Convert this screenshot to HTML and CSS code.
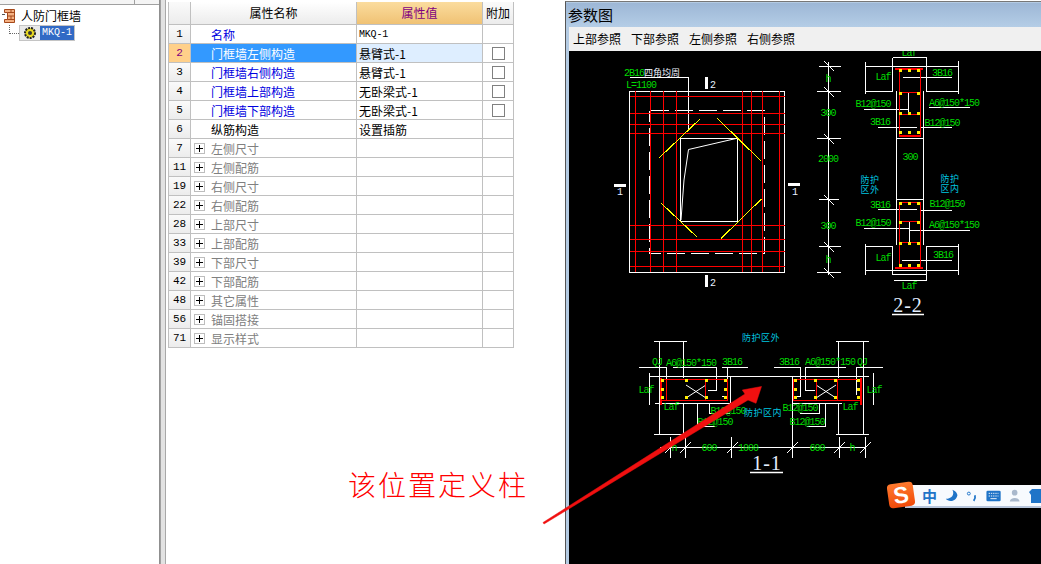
FILE: index.html
```html
<!DOCTYPE html>
<html lang="zh">
<head>
<meta charset="utf-8">
<title>人防门框墙</title>
<link rel="stylesheet" href="styles.css">
</head>
<body>
<div class="app">
  <aside class="tree-pane">
    <div class="tree-top"><span class="tree-top-cell"></span></div>
    <div class="tree-root">
      <svg class="brick" width="13" height="14" viewBox="0 0 13 14"><path d="M2.500 .5H12.500V13.500H2.500V10.500H5.500V3.500H2.500Z" fill="#f4b183" stroke="#a5481a"/><path d="M5.500 3.500H12.500M5.500 7H12.500M5.500 10.500H12.500M9 .5V3.500M9 7V10.500" stroke="#a5481a" fill="none"/><rect x="0" y="5" width="3" height="1" fill="#555"/></svg>
      <span>人防门框墙</span>
    </div>
    <div class="tree-child">
      <span class="tree-dots"></span>
      <span class="node">
        <span class="node-icon"><svg width="14" height="14" viewBox="0 0 14 14"><circle cx="7" cy="7" r="5" fill="#e8d820" stroke="#222" stroke-width="2" stroke-dasharray="2 1"/><circle cx="7" cy="7" r="2" fill="#333"/></svg></span>
        <span class="node-label">MKQ-1</span>
      </span>
    </div>
  </aside>
  <div class="splitter"></div>
  <main class="prop-pane">
    <div class="grid">
      <div class="row head"><span class="c n"></span><span class="c name">属性名称</span><span class="c val">属性值</span><span class="c ex">附加</span></div>
      <div class="row"><span class="c n">1</span><span class="c name blue">名称</span><span class="c val mono">MKQ-1</span><span class="c ex"></span></div>
      <div class="row sel"><span class="c n">2</span><span class="c name blue">门框墙左侧构造</span><span class="c val">悬臂式-1</span><span class="c ex"><i class="chk"></i></span></div>
      <div class="row"><span class="c n">3</span><span class="c name blue">门框墙右侧构造</span><span class="c val">悬臂式-1</span><span class="c ex"><i class="chk"></i></span></div>
      <div class="row"><span class="c n">4</span><span class="c name blue">门框墙上部构造</span><span class="c val">无卧梁式-1</span><span class="c ex"><i class="chk"></i></span></div>
      <div class="row"><span class="c n">5</span><span class="c name blue">门框墙下部构造</span><span class="c val">无卧梁式-1</span><span class="c ex"><i class="chk"></i></span></div>
      <div class="row"><span class="c n">6</span><span class="c name">纵筋构造</span><span class="c val">设置插筋</span><span class="c ex"></span></div>
      <div class="row grp"><span class="c n">7</span><span class="c name"><i class="plus"></i>左侧尺寸</span><span class="c val"></span><span class="c ex"></span></div>
      <div class="row grp"><span class="c n">11</span><span class="c name"><i class="plus"></i>左侧配筋</span><span class="c val"></span><span class="c ex"></span></div>
      <div class="row grp"><span class="c n">19</span><span class="c name"><i class="plus"></i>右侧尺寸</span><span class="c val"></span><span class="c ex"></span></div>
      <div class="row grp"><span class="c n">22</span><span class="c name"><i class="plus"></i>右侧配筋</span><span class="c val"></span><span class="c ex"></span></div>
      <div class="row grp"><span class="c n">28</span><span class="c name"><i class="plus"></i>上部尺寸</span><span class="c val"></span><span class="c ex"></span></div>
      <div class="row grp"><span class="c n">33</span><span class="c name"><i class="plus"></i>上部配筋</span><span class="c val"></span><span class="c ex"></span></div>
      <div class="row grp"><span class="c n">39</span><span class="c name"><i class="plus"></i>下部尺寸</span><span class="c val"></span><span class="c ex"></span></div>
      <div class="row grp"><span class="c n">42</span><span class="c name"><i class="plus"></i>下部配筋</span><span class="c val"></span><span class="c ex"></span></div>
      <div class="row grp"><span class="c n">48</span><span class="c name"><i class="plus"></i>其它属性</span><span class="c val"></span><span class="c ex"></span></div>
      <div class="row grp"><span class="c n">56</span><span class="c name"><i class="plus"></i>锚固搭接</span><span class="c val"></span><span class="c ex"></span></div>
      <div class="row grp"><span class="c n">71</span><span class="c name"><i class="plus"></i>显示样式</span><span class="c val"></span><span class="c ex"></span></div>
    </div>
  </main>
  <section class="param">
    <header class="param-title">参数图</header>
    <nav class="param-tools"><span>上部参照</span><span>下部参照</span><span>左侧参照</span><span>右侧参照</span></nav>
    <div class="canvas">
      <svg class="cad" width="472" height="513" viewBox="569 51 472 513">
        <!-- plan -->
        <g class="w">
          <rect x="629.500" y="91.500" width="155" height="181"/>
          <rect x="680.500" y="138.500" width="57" height="83"/>
          <path d="M630 77.500H688.500V130"/>
          <path class="soft" d="M681 220L684 180L688.500 149.500L736 138.500"/>
          <path class="dash" d="M651 110.500H764.500V253.500H649V110.500"/>
        </g>
        <g class="r">
          <path d="M630 96.500H785M630 113.500H785M630 124.500H785M630 133.500H785M630 225.500H785M630 239.500H785M630 251.500H785M630 266.500H785"/>
          <path d="M635.500 91V272M650.500 91V272M663.500 91V272M676.500 91V272M742.500 91V272M751.500 91V272M762.500 91V272M779.500 91V272"/>
        </g>
        <g class="y"><path d="M659.500 157.500L700.500 118.500M717.500 118.500L761.500 161.500M661.500 203.500L697.500 237.500M721 238.500L761.500 199"/></g>
        <g class="wf"><rect x="705" y="77" width="3" height="12"/><rect x="705" y="275" width="3" height="12"/><rect x="614" y="184" width="12" height="3"/><rect x="788" y="183" width="12" height="3"/></g>
        <text class="t tw" x="710" y="88">2</text><text class="t tw" x="710" y="286">2</text><text class="t tw" x="617" y="195">1</text><text class="t tw" x="792" y="195">1</text>
        <text class="t tg" x="624" y="76">2B16<tspan class="cjk">四角均周</tspan></text>
        <text class="t tg" x="626" y="88">L=1100</text>

        <!-- section 2-2 -->
        <g class="w">
          <path d="M828.500 62V275M819 66.500H841M817 91.500H841M817 138.500H841M819 199.500H839M819 246.500H841M817 272.500H841"/>
          <path class="soft" d="M824 61L834 71M824 87L834 97M824 134L834 144M824 195L834 205M824 242L834 252M824 268L834 278"/>
          <path d="M896.500 91V245M923.500 91V245M896 138.500H924M896 199.500H924"/>
          <path d="M865.500 62V94M958.500 61V94M865 66.500H958M865 91.500H892.500V58M927 91.500H958M926.500 91.500V57.500H893"/>
          <path d="M865.500 244V275M958.500 244V275M865 246.500H892.500V274.500H927M927 246.500H958M865 270.500H958M926.500 246V280.500H894"/>
          <path d="M864 109.500H908.500M929 107.500H970M878 127.500H917M920 127.500H952M903 77.500H952M878 209.500H917M920 210.500H952M864 228.500H908.500M909 230.500H970M902 260.500H952M908.500 92V112M909.500 222V242"/>
        </g>
        <g class="r">
          <path d="M899.500 68V135.500H920.500V68M899 92.500H921M899 114.500H921"/>
          <path d="M899.500 202V267M920.500 202V267M899 202.500H921M899 221.500H921M899 242.500H921"/>
          <path class="thick" d="M895 68.500H923M895 267.500H923M899 135.500H921"/>
        </g>
        <g class="yf">
          <rect x="899" y="69" width="3" height="3"/><rect x="908" y="69" width="3" height="3"/><rect x="917" y="69" width="3" height="3"/>
          <rect x="899" y="92" width="3" height="3"/><rect x="917" y="92" width="3" height="3"/>
          <rect x="899" y="112" width="3" height="3"/><rect x="908" y="112" width="3" height="3"/><rect x="917" y="112" width="3" height="3"/>
          <rect x="899" y="131" width="3" height="3"/><rect x="908" y="131" width="3" height="3"/><rect x="917" y="131" width="3" height="3"/>
          <rect x="899" y="202" width="3" height="3"/><rect x="908" y="202" width="3" height="3"/><rect x="917" y="202" width="3" height="3"/>
          <rect x="899" y="221" width="3" height="3"/><rect x="917" y="221" width="3" height="3"/>
          <rect x="899" y="242" width="3" height="3"/><rect x="908" y="242" width="3" height="3"/><rect x="917" y="242" width="3" height="3"/>
          <rect x="899" y="264" width="3" height="3"/><rect x="908" y="264" width="3" height="3"/><rect x="917" y="264" width="3" height="3"/>
        </g>
        <g class="t tg mid">
          <text x="828" y="82">h</text><text x="828" y="116">300</text><text x="828" y="162">2000</text><text x="828" y="229">300</text><text x="828" y="263">h</text>
          <text x="909" y="56">Laf</text><text x="883" y="80">Laf</text><text x="942" y="76">3B16</text><text x="873" y="107">B12@150</text><text x="954" y="106">A6@150*150</text><text x="880" y="125">3B16</text><text x="942" y="126">B12@150</text><text x="910" y="160">300</text><text x="880" y="208">3B16</text><text x="947" y="207">B12@150</text><text x="873" y="226">B12@150</text><text x="954" y="228">A6@150*150</text><text x="883" y="261">Laf</text><text x="943" y="258">3B16</text><text x="909" y="289">Laf</text>
        </g>
        <g class="t tc mid">
          <text x="870" y="183">防护<tspan x="870" dy="10">区外</tspan></text><text x="950" y="182">防护<tspan x="950" dy="10">区内</tspan></text>
        </g>
        <text class="big" x="908" y="312">2-2</text>
        <path class="wb" d="M892 314.500H924"/>

        <!-- section 1-1 -->
        <g class="w">
          <path d="M654 341.500H687M659.500 341V434M683.500 341V378M683.500 403V434M654 434.500H687M836 341.500H869M838.500 341V378M838.500 403V434M863.500 341V434M836 434.500H869"/>
          <path d="M649.500 376.500H869M655 403.500H730M792 403.500H842M730.500 376V403M792.500 376V458"/>
          <path d="M639 367.500H667M673 367.500H716.500M722 367.500H748M774 367.500H801M806 367.500H846M857 367.500H883"/>
          <path d="M716.500 367V390H708M805.500 367V390H815M666.500 367V395M856.500 367V395M800.500 367V396H795M727 367V396H722M649.500 373V405M873 373V405"/>
          <path d="M660 447.500H866M670.500 437V458M685.500 437V458M731.500 437V458M839.500 437V458M865.500 437V458"/>
          <path class="soft" d="M665 453L676 442M680 453L691 442M727 453L738 442M787 453L798 442M834 453L845 442M860 453L871 442"/>
          <path class="soft" d="M686 385L706 398M706 385L686 398M816 385L836 398M836 385L816 398"/>
          <path d="M709 403V413H730M819 403V413H800M697 403V426H715M825 403V426H807"/>
        </g>
        <g class="r">
          <path d="M660.500 379.500H727.500V400.500H660.500ZM666.500 380V400M705.500 380V400M793.500 379.500H861V400.500H793.500ZM816.500 380V400M837.500 380V400"/>
          <path class="thick" d="M660.500 378V405M861 378V405"/>
        </g>
        <g class="yf">
          <rect x="661" y="379" width="3" height="3"/><rect x="661" y="388" width="3" height="3"/><rect x="661" y="396" width="3" height="3"/>
          <rect x="685" y="379" width="3" height="3"/><rect x="685" y="396" width="3" height="3"/><rect x="705" y="379" width="3" height="3"/><rect x="705" y="396" width="3" height="3"/>
          <rect x="724" y="379" width="3" height="3"/><rect x="724" y="388" width="3" height="3"/><rect x="724" y="396" width="3" height="3"/>
          <rect x="794" y="379" width="3" height="3"/><rect x="794" y="388" width="3" height="3"/><rect x="794" y="396" width="3" height="3"/>
          <rect x="814" y="379" width="3" height="3"/><rect x="814" y="396" width="3" height="3"/><rect x="834" y="379" width="3" height="3"/><rect x="834" y="396" width="3" height="3"/>
          <rect x="857" y="379" width="3" height="3"/><rect x="857" y="388" width="3" height="3"/><rect x="857" y="396" width="3" height="3"/>
        </g>
        <g class="t tg mid">
          <text x="657" y="365">QJ</text><text x="691" y="366">A6@150*150</text><text x="732" y="365">3B16</text><text x="789" y="365">3B16</text><text x="830" y="365">A6@150*150</text><text x="862" y="365">QJ</text>
          <text x="646" y="393">Laf</text><text x="671" y="410">Laf</text><text x="874" y="393">Laf</text><text x="850" y="410">Laf</text>
          <text x="728" y="414">B12@150</text><text x="800" y="411">B12@150</text><text x="715" y="425">B12@150</text><text x="807" y="425">B12@150</text>
          <text x="674" y="451">h</text><text x="709" y="451">600</text><text x="748" y="451">1000</text><text x="817" y="451">600</text><text x="852" y="451">h</text>
        </g>
        <g class="t tc mid"><text x="761" y="341">防护区外</text><text x="763" y="416">防护区内</text></g>
        <text class="big" x="767" y="470">1-1</text>
        <path class="wb" d="M750 472.500H783"/>
      </svg>
    </div>
  </section>
</div>

<svg class="arrow" width="1041" height="564" viewBox="0 0 1041 564"><path d="M543 522.500L745 394L742.300 390L761.500 386.500L756 403.300L748 400L544 524Z"/></svg>
<div class="note">该位置定义柱</div>

<div class="ime">
  <span class="ime-logo">S</span>
  <span class="ime-bar">
    <span class="ime-zh">中</span>
    <svg width="14" height="15" viewBox="0 0 16 16"><path d="M9 1C12 7 8 12 1 12C4 16 13 16 15 8C15 5 12 2 9 1Z" fill="#1f74c8"/></svg>
    <svg width="12" height="16" viewBox="0 0 14 16"><circle cx="3.500" cy="5" r="1.800" fill="none" stroke="#1f74c8" stroke-width="1.200"/><path d="M11 7C12 10 11 12 9.500 14" stroke="#1f74c8" stroke-width="2.200" fill="none"/></svg>
    <svg width="16" height="12" viewBox="0 0 17 13"><rect x="0.500" y="0.500" width="16" height="12" rx="1.500" fill="#1f74c8"/><path d="M3 3.500h11M3 6.500h11" stroke="#fff" stroke-dasharray="1.500 1"/><path d="M5 9.500h7" stroke="#fff"/></svg>
    <svg width="12" height="15" viewBox="0 0 14 15"><circle cx="7" cy="4" r="3.500" fill="#a9b8cc"/><path d="M1 15C1 9 13 9 13 15Z" fill="#a9b8cc"/></svg>
    <svg class="ime-shirt" width="12" height="14" viewBox="0 0 12 14"><path d="M3 0L0 3L2 6V14H12V0Z" fill="#1f74c8"/></svg>
  </span>
</div>
</body>
</html>
```
FILE: styles.css
```css
* { box-sizing: border-box; }
html, body { margin: 0; padding: 0; width: 1041px; height: 564px; overflow: hidden; background: #fff; }
body { position: relative; font: 12px/1 "Noto Sans CJK SC", "Liberation Sans", sans-serif; color: #000; }

.app { display: flex; height: 564px; }

/* tree */
.tree-pane { width: 160px; flex: none; background: #fff; border-right: 1px solid #8f8f8f; }
.tree-top { height: 5px; border-bottom: 1px solid #a0a0a0; background: #f4f4f4; }
.tree-top-cell { display: block; width: 135px; height: 4px; border-right: 1px solid #a0a0a0; }
.tree-root { display: flex; align-items: center; gap: 6px; height: 16px; margin-top: 3px; padding-left: 2px; font-size: 12px; }
.tree-child { display: flex; height: 16px; margin-top: 1px; padding-left: 9px; }
.tree-dots { width: 10px; height: 9px; border-left: 1px dotted #666; border-bottom: 1px dotted #666; }
.node { display: flex; height: 16px; border: 1px solid #c4c4c4; background: #e9e9e9; }
.node-icon { width: 20px; display: flex; align-items: center; justify-content: center; }
.node-label { width: 34px; background: #316ac5; color: #fff; font: 10px/14px "Liberation Mono", monospace; text-align: center; }

.splitter { width: 6px; flex: none; background: #e2e2e2; border-left: 1px solid #a0a0a0; border-right: 1px solid #a8a8a8; }

/* property grid */
.prop-pane { width: 399px; flex: none; padding: 2px 0 0 2px; background: #fff; }
.grid { width: 346px; border-left: 1px solid #c0c0c0; }
.row { display: grid; grid-template-columns: 22px 166px 126px 31px; height: 19px; }
.c { display: flex; align-items: center; padding-top: 2px; border-right: 1px solid #c0c0c0; border-bottom: 1px solid #c0c0c0; overflow: hidden; white-space: nowrap; }
.n { justify-content: center; padding-top: 0; background: linear-gradient(#fafafa, #ececec); font-family: "Liberation Mono", monospace; font-size: 11px; }
.name { padding-left: 20px; }
.val { padding-left: 2px; }
.mono { font: 10px "Liberation Mono", monospace; letter-spacing: -0.2px; padding-top: 1px; }
.ex { justify-content: center; padding-top: 0; }
.blue { color: #0000e0; }
.head { height: 23px; }
.head .c { justify-content: center; padding: 0 0 1px; background: linear-gradient(#fff, #ececec); }
.head .n { background: linear-gradient(#fafafa, #ececec); }
.head .val { background: linear-gradient(#fbdc9e, #f0c274); color: #800080; }
.head .ex { background: linear-gradient(#fafafa, #ececec); }
.sel .n { background: #ffd08a; color: #800080; }
.sel .name { background: #3399ff; color: #fff; }
.sel .val { background: #deeeff; }
.sel .ex { background: #fff; }
.chk { width: 13px; height: 13px; border: 1px solid #808080; background: #fff; display: block; }
.grp .name { padding-left: 3px; color: #808080; }
.plus { width: 11px; height: 11px; margin-right: 6px; border: 1px solid #bdbdbd; background: linear-gradient(#000, #000) center/7px 1px no-repeat, linear-gradient(#000, #000) center/1px 7px no-repeat, #fff; display: block; flex: none; margin-top: -2px; }

/* parameter window */
.param { flex: 1; min-width: 0; height: 563px; margin-top: 1px; padding: 1px 0 0 3px; display: flex; flex-direction: column; background: #b4cbe3; border-left: 1px solid #555; border-top: 1px solid #777; }
.param-title { height: 24px; flex: none; margin-left: -3px; padding: 4px 0 0 2px; background: linear-gradient(#9db7d6, #b4cde6); font-size: 15px; }
.param-tools { height: 24px; flex: none; display: flex; gap: 10px; align-items: center; padding: 0 0 1px 4px; background: #f0f0f0; font-size: 12px; }
.canvas { flex: 1; background: #000; overflow: hidden; }
.cad { display: block; }
.w path, .w rect { fill: none; stroke: #fff; stroke-width: 1; shape-rendering: crispEdges; }
.w .dash { stroke-dasharray: 18 6 18 6; }
.w .soft { shape-rendering: auto; }
.wb { fill: none; stroke: #fff; stroke-width: 1.500; }
.wf rect { fill: #fff; }
.r path { fill: none; stroke: #f00; stroke-width: 1; shape-rendering: crispEdges; }
.r .thick { stroke-width: 2; }
.y path { fill: none; stroke: #ffff00; stroke-width: 1; shape-rendering: crispEdges; }
.yf rect { fill: #ffee00; }
.t { font: 10px "Liberation Mono", monospace; letter-spacing: -1px; }
.t text { font-family: "Liberation Mono", monospace; }
.tg, .tg text { fill: #00dc00; }
.cjk { fill: #eef4ff; font-family: "Noto Sans CJK SC", sans-serif; font-size: 9px; letter-spacing: 0; }
.tw { fill: #e8f0ff; letter-spacing: 0; }
.tc text { fill: #00c8e0; font-family: "Noto Sans CJK SC", sans-serif; font-size: 9px; letter-spacing: 0.5px; }
.mid { text-anchor: middle; }
.big { font: 20px "Liberation Serif", serif; fill: #e4efff; text-anchor: middle; letter-spacing: 1px; }

/* overlays */
.arrow { position: absolute; left: 0; top: 0; pointer-events: none; }
.arrow path { fill: #f01010; stroke: #f01010; stroke-width: 0.500; }
.note { position: absolute; left: 348px; top: 468px; font: 300 28px/32px "Noto Sans CJK SC", sans-serif; letter-spacing: 2px; color: #f00; white-space: nowrap; }

.ime { position: absolute; left: 888px; top: 483px; width: 153px; height: 26px; }
.ime-logo { position: absolute; left: 0; top: 0; width: 26px; height: 24px; z-index: 1; border-radius: 4px; background: linear-gradient(#ff7a2e, #f04a0a); color: #fff; font: bold 23px/24px "Liberation Sans", sans-serif; text-align: center; transform: rotate(-8deg); }
.ime-bar { position: absolute; left: 17px; top: 2px; right: 0; height: 23px; display: flex; align-items: center; gap: 8px; padding-left: 17px; background: #f7fafe; border-bottom: 2px solid #b8c6dc; overflow: hidden; }
.ime-zh { color: #1f74c8; font-size: 15px; font-weight: 700; }
.ime-shirt { flex: none; margin-left: 1px; }
```
